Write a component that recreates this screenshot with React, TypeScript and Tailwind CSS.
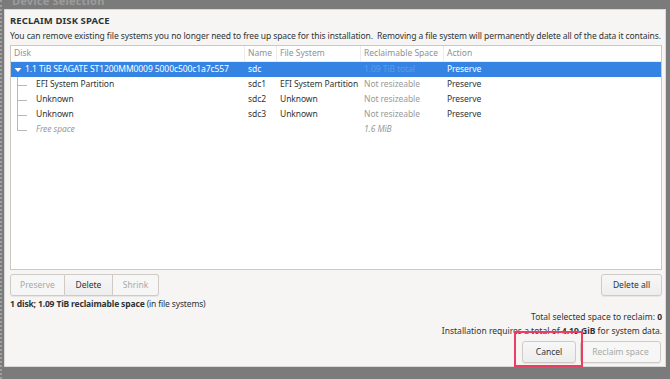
import React from "react";

const font = { fontFamily: '"Noto Sans", "DejaVu Sans", sans-serif' };

function Btn({ children, disabled, className = "" }: { children: React.ReactNode; disabled?: boolean; className?: string }) {
  return (
    <div
      className={
        "flex items-center justify-center h-[22px] rounded-[3px] border border-[#cfcac6] bg-gradient-to-b from-[#f7f7f7] to-[#ededed] text-[8.5px] shadow-[0_1px_0_rgba(0,0,0,0.06)] " +
        (disabled ? "text-[#a7a9a6] from-[#f6f6f6] to-[#f6f6f6]" : "text-[#2e3436]") +
        " " +
        className
      }
    >
      {children}
    </div>
  );
}

function TreeRow({ disk, name, fs, rec, action, last, italic }: { disk: string; name: string; fs: string; rec: string; action: string; last?: boolean; italic?: boolean }) {
  return (
    <div className="relative grid grid-cols-[234px_32px_84px_83px_1fr] h-[15px] items-center text-[8.5px] text-[#2e3436] tracking-[-0.08px]">
      <div className="relative h-full flex items-center pl-[25px]">
        <div className={"absolute left-[6px] top-0 w-px bg-[#b9b9b9] " + (last ? "h-[8px]" : "h-full")} />
        <div className="absolute left-[6px] top-[7.5px] w-[10px] h-px bg-[#b9b9b9]" />
        <span className={italic ? "italic text-[#9a9a9a]" : ""}>{disk}</span>
      </div>
      <div className="pl-[3px]">{name}</div>
      <div className="pl-[3px]">{fs}</div>
      <div className={"pl-[3px] text-[#9a9a9a] " + (italic ? "italic" : "")}>{rec}</div>
      <div className="pl-[3px]">{action}</div>
    </div>
  );
}

export default function App() {
  return (
    <div className="w-[670px] h-[379px] bg-[#7b7b7b] relative overflow-hidden" style={font}>
      <div className="absolute left-0 top-0 w-[2px] h-full border-l-2 border-dotted border-[#a0a0a0]" />
      <div className="absolute left-[12px] top-[-6px] text-[11px] leading-[14px] text-[#9b9b9b] font-bold tracking-[0.2px]">Device Selection</div>
      <div className="absolute left-[4px] top-[9px] w-[662px] h-[358px] bg-[#f6f5f4] border border-[#d8d8d8] flex flex-col pl-[5px] pr-[3px]">
        <div className="pt-[5px] text-[9.5px] font-bold text-[#2e3436] leading-[12px] tracking-[0.1px]">RECLAIM DISK SPACE</div>
        <div className="mt-[3px] text-[8.5px] text-[#2e3436] leading-[12px] tracking-[-0.09px] whitespace-nowrap">
          You can remove existing file systems you no longer need to free up space for this installation.&nbsp; Removing a file system will permanently delete all of the data it contains.
        </div>
        <div className="mt-[3px] h-[225px] w-[652px] bg-white border border-[#cdc7c2] flex flex-col">
          <div className="grid grid-cols-[234px_32px_84px_83px_1fr] h-[16px] items-center text-[8.5px] text-[#8f9190] border-b border-[#ececec]">
            <div className="pl-[3px] border-r border-[#ececec] h-full flex items-center">Disk</div>
            <div className="pl-[3px] border-r border-[#ececec] h-full flex items-center">Name</div>
            <div className="pl-[3px] border-r border-[#ececec] h-full flex items-center">File System</div>
            <div className="pl-[3px] border-r border-[#ececec] h-full flex items-center">Reclaimable Space</div>
            <div className="pl-[3px] h-full flex items-center">Action</div>
          </div>
          <div className="grid grid-cols-[234px_32px_84px_83px_1fr] h-[15px] items-center text-[8.5px] text-white bg-[#3584e4] tracking-[-0.08px]">
            <div className="flex items-center pl-[3px]">
              <svg width="8" height="8" viewBox="0 0 8 8" className="mr-[3px]">
                <path d="M0.5 2 L7.5 2 L4 6 Z" fill="white" />
              </svg>
              <span>1.1 TiB SEAGATE ST1200MM0009 5000c500c1a7c557</span>
            </div>
            <div className="pl-[3px]">sdc</div>
            <div className="pl-[3px]"></div>
            <div className="pl-[3px] text-[#5e9be8]">1.09 TiB total</div>
            <div className="pl-[3px]">Preserve</div>
          </div>
          <TreeRow disk="EFI System Partition" name="sdc1" fs="EFI System Partition" rec="Not resizeable" action="Preserve" />
          <TreeRow disk="Unknown" name="sdc2" fs="Unknown" rec="Not resizeable" action="Preserve" />
          <TreeRow disk="Unknown" name="sdc3" fs="Unknown" rec="Not resizeable" action="Preserve" />
          <TreeRow disk="Free space" name="" fs="" rec="1.6 MiB" action="" last italic />
        </div>
        <div className="mt-[4px] flex items-center w-[652px]">
          <Btn disabled className="w-[55px] rounded-r-none">Preserve</Btn>
          <Btn className="w-[48px] rounded-none border-l-0 from-[#ededed] to-[#e4e4e4]">Delete</Btn>
          <Btn disabled className="w-[46px] rounded-l-none border-l-0">Shrink</Btn>
          <div className="flex-1" />
          <Btn className="w-[61px]">Delete all</Btn>
        </div>
        <div className="mt-[2px] text-[8.5px] text-[#2e3436] leading-[12px] tracking-[-0.15px]">
          <span className="font-bold">1 disk; 1.09 TiB reclaimable space</span> (in file systems)
        </div>
        <div className="mt-[1px] w-[652px] text-right text-[8.5px] text-[#2e3436] leading-[12px]">
          Total selected space to reclaim: <span className="font-bold">0</span>
        </div>
        <div className="mt-[2px] w-[652px] text-right text-[8.5px] text-[#2e3436] leading-[12px]">
          Installation requires a total of <span className="font-bold">4.19 GiB</span> for system data.
        </div>
        <div className="mt-[4px] w-[652px] flex justify-end gap-[4px] pr-[1px]">
          <Btn className="w-[54px]">Cancel</Btn>
          <Btn disabled className="w-[81px]">Reclaim space</Btn>
        </div>
      </div>
      <div className="absolute left-[514px] top-[331px] w-[69px] h-[36px] border-2 border-[#ec3d63]" />
    </div>
  );
}
